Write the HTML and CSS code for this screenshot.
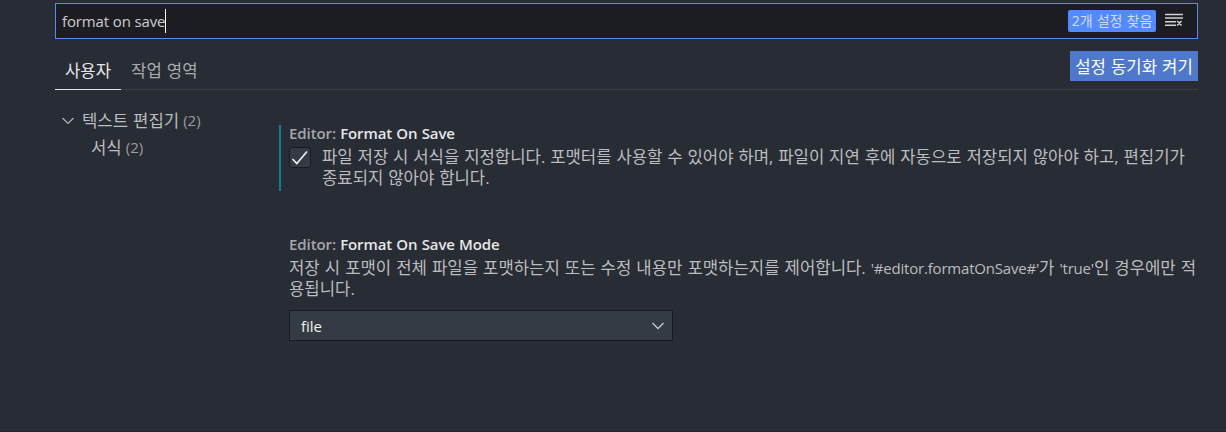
FILE: index.html
```html
<!DOCTYPE html>
<html lang="ko">
<head>
<meta charset="utf-8">
<title>설정</title>
<link rel="stylesheet" href="styles.css">
</head>
<body>
<main class="settings">
  <div class="search">
    <span class="search-text">format on save</span><span class="caret"></span>
    <span class="badge">2개 설정 찾음</span>
    <svg class="clear" width="18" height="14" viewBox="0 0 18 14"><path d="M0 1.500h18M0 5h18M0 8.800h11M0 12.300h11M12.200 8l4.300 4.500M16.500 8l-4.300 4.500" fill="none" stroke="#d0d0d0" stroke-width="1.600"/></svg>
  </div>
  <div class="header">
    <nav class="tabs">
      <span class="tab active">사용자</span>
      <span class="tab">작업 영역</span>
    </nav>
    <button class="sync">설정 동기화 켜기</button>
  </div>
  <div class="body">
    <aside class="toc">
      <div class="toc-row"><svg class="chevron" width="12" height="8" viewBox="0 0 12 8"><path d="M.5 1L6 6.500 11.500 1" fill="none" stroke="#b0b3b8" stroke-width="1.200"/></svg><span>텍스트 편집기</span><span class="count">(2)</span></div>
      <div class="toc-row child"><span>서식</span><span class="count">(2)</span></div>
    </aside>
    <section class="list">
      <article class="item modified">
        <h3 class="title"><span class="category">Editor:</span> Format On Save</h3>
        <div class="check-row">
          <span class="checkbox"><svg width="18" height="16" viewBox="0 0 18 16"><path d="M1.500 9L5.800 13.500 16 1.500" fill="none" stroke="#f0f0f0" stroke-width="1.600"/></svg></span>
          <p class="desc"><span class="line">파일 저장 시 서식을 지정합니다. 포맷터를 사용할 수 있어야 하며, 파일이 지연 후에 자동으로 저장되지 않아야 하고, 편집기가</span><span class="line">종료되지 않아야 합니다.</span></p>
        </div>
      </article>
      <article class="item">
        <h3 class="title"><span class="category">Editor:</span> Format On Save Mode</h3>
        <p class="desc wide"><span class="line">저장 시 포맷이 전체 파일을 포맷하는지 또는 수정 내용만 포맷하는지를 제어합니다. <span class="latin">'#editor.formatOnSave#'</span>가 <span class="latin">'true'</span>인 경우에만 적</span><span class="line">용됩니다.</span></p>
        <div class="select"><span>file</span><svg width="12" height="8" viewBox="0 0 12 8"><path d="M.5 1L6 6.500 11.500 1" fill="none" stroke="#c8cacd" stroke-width="1.300"/></svg></div>
      </article>
    </section>
  </div>
</main>
</body>
</html>
```
FILE: styles.css
```css
* { box-sizing: border-box; }
body {
  margin: 0;
  height: 432px;
  overflow: hidden;
  background: #282c34;
  border-bottom: 1px solid #21252b;
  color: #bcbdbf;
  font-family: "Open Sans", "Noto Sans CJK KR", sans-serif;
  font-size: 16.7px;
  line-height: 21px;
  white-space: nowrap;
}
.settings { padding: 3px 28px 0 55px; }
.search {
  display: flex;
  align-items: center;
  height: 36px;
  padding: 0 14px 0 6px;
  background: #1c1d22;
  border: 1px solid #528bff;
}
.search-text { font-size: 15px; color: #ccc; letter-spacing: -0.13px; }
.caret { width: 1px; height: 24px; background: #fff; }
.badge {
  margin-left: auto;
  width: 88px;
  height: 22px;
  border-radius: 2px;
  background: #528bff;
  color: #d7dae0;
  font-size: 14px;
  line-height: 22px;
  text-align: center;
  word-spacing: 0.5px;
}
.clear { margin: 0 0 2px 9px; }
.header {
  display: flex;
  justify-content: space-between;
  height: 51px;
  border-bottom: 1px solid #3a3d41;
}
.tabs { display: flex; height: 51px; word-spacing: 0.7px; }
.tab { padding: 21px 10px 0; color: #a9abae; }
.tab.active { color: #e7e7e7; border-bottom: 1px solid #e7e7e7; }
.sync {
  width: 128px;
  height: 30px;
  margin-top: 12px;
  padding: 0;
  border: 0;
  background: #4d78cc;
  color: #fff;
  font: inherit;
  word-spacing: 0.7px;
}
.body { display: flex; }
.toc { width: 224px; padding-top: 17px; word-spacing: 0.7px; }
.toc-row { display: flex; align-items: center; height: 27px; padding-left: 7px; }
.toc-row.child { padding-left: 36px; }
.chevron { margin-right: 8px; }
.count { margin-left: 4px; font-size: 15px; color: #9b9da1; }
.list { padding-top: 35px; }
.item { height: 66px; padding-left: 8px; border-left: 2px solid transparent; }
.item.modified { border-left-color: #0c7d9d; margin-bottom: 45px; }
.title {
  margin: 0;
  height: 21px;
  font-size: 15px;
  line-height: 16px;
  font-weight: 600;
  letter-spacing: -0.08px;
  word-spacing: 0.3px;
  color: #e7e7e7;
}
.category { color: #a6a7aa; }
.check-row { display: flex; }
.checkbox {
  display: grid;
  place-items: center;
  width: 22px;
  height: 21px;
  margin: 1px 11px 0 0;
  border: 1px solid #181a1f;
  border-radius: 3px;
  background: #353b45;
}
.desc { margin: 0; word-spacing: 0.5px; }
.desc.wide { word-spacing: 0.7px; }
.line { display: block; height: 21px; }
.latin { font-size: 15px; letter-spacing: -0.2px; }
.select {
  display: flex;
  align-items: center;
  justify-content: space-between;
  width: 384px;
  height: 31px;
  margin-top: 11px;
  padding: 0 8px 0 11px;
  border: 1px solid #181a1f;
  background: #353b45;
  color: #f0f0f0;
  font-size: 15px;
}
.select span { padding-top: 2px; }
```
